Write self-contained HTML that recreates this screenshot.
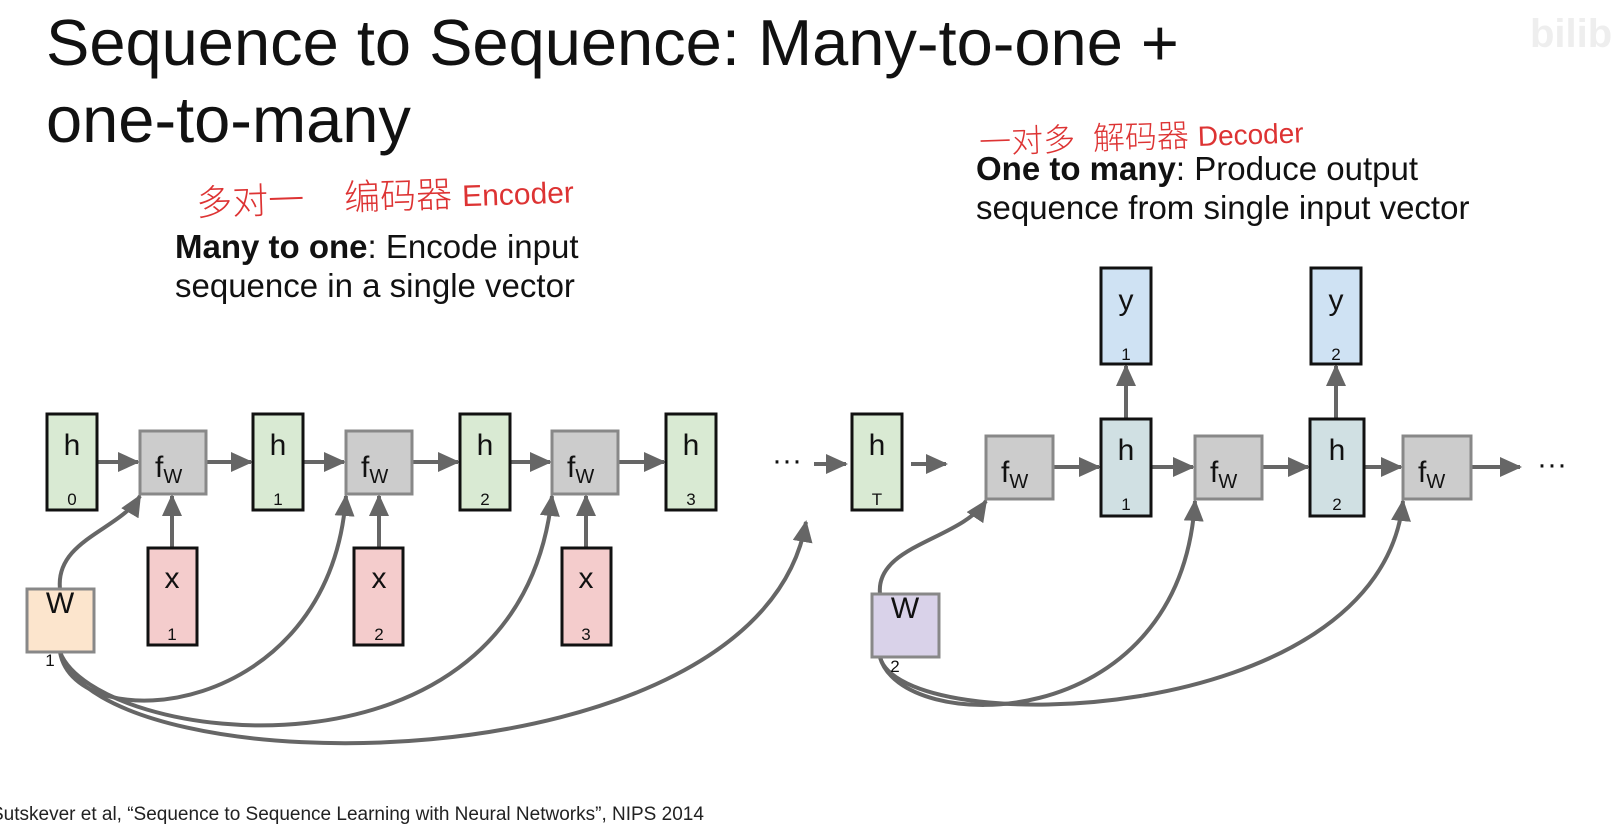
<!DOCTYPE html>
<html><head><meta charset="utf-8"><style>
html,body{margin:0;padding:0;background:#fff;width:1616px;height:834px;overflow:hidden;font-family:"Liberation Sans",Arial,sans-serif}
.t{position:absolute;color:#111;white-space:nowrap}
</style></head><body>
<div class="t" style="left:46px;top:4px;font-size:65px;line-height:77px">Sequence to Sequence: Many-to-one +<br>one-to-many</div>
<div class="t" style="left:175px;top:227px;font-size:33px;line-height:39px"><b>Many to one</b>: Encode input<br>sequence in a single vector</div>
<div class="t" style="left:976px;top:149px;font-size:33px;line-height:39px"><b>One to many</b>: Produce output<br>sequence from single input vector</div>
<div class="t" style="left:-9px;top:805px;font-size:19px;line-height:19px;color:#222">Sutskever et al, “Sequence to Sequence Learning with Neural Networks”, NIPS 2014</div>
<div class="t" style="left:196px;top:168px;font-size:36px;color:#d33;font-family:'Liberation Sans','Noto Sans CJK SC',sans-serif;font-weight:300;transform:rotate(-2deg)">多对一&nbsp;&nbsp;&nbsp;&nbsp;编码器 <span style="font-size:30px">Encoder</span></div>
<div class="t" style="left:979px;top:112px;font-size:32px;color:#d33;font-family:'Liberation Sans','Noto Sans CJK SC',sans-serif;font-weight:300;transform:rotate(-2deg)">一对多&nbsp;&nbsp;解码器 <span style="font-size:28px">Decoder</span></div>
<div class="t" style="left:1530px;top:12px;font-size:40px;font-weight:bold;color:#eee">bilib</div>
<svg width="1616" height="834" style="position:absolute;left:0;top:0" font-family="Liberation Sans,Arial,sans-serif">
<defs><marker id="b" markerWidth="22" markerHeight="20" refX="20" refY="10" orient="auto" markerUnits="userSpaceOnUse"><path d="M0,0 L22,10 L0,20z" fill="#666"/></marker></defs>
<g stroke="#666" stroke-width="4" fill="none" marker-end="url(#b)">
<path d="M98,462 H138"/><path d="M206,462 H251"/><path d="M303,462 H344"/><path d="M412,462 H458"/><path d="M510,462 H550"/><path d="M618,462 H664"/>
<path d="M814,464 H846"/><path d="M911,464 H946"/>
<path d="M1053,467 H1099"/><path d="M1151,467 H1193"/><path d="M1262,467 H1308"/><path d="M1364,467 H1401"/><path d="M1471,467 H1520"/>
<path d="M172,548 V496"/><path d="M379,548 V496"/><path d="M586,548 V496"/>
<path d="M1126,419 V366"/><path d="M1336,419 V366"/>
<path d="M60,589 C55,540 120,530 140,496"/>
<path d="M60,652 C75,740 330,720 346,496"/>
<path d="M60,652 C95,745 520,800 552,496"/>
<path d="M60,652 C100,790 760,790 806,522"/>
<path d="M880,594 C875,545 960,540 986,501"/>
<path d="M880,657 C900,735 1180,740 1195,501"/>
<path d="M880,657 C900,740 1380,730 1403,501"/>
</g>
<g font-size="30" text-anchor="middle" fill="#111">
<g stroke="#111" stroke-width="3"><rect x="47" y="414" width="50" height="96" fill="#d9ead3"/><rect x="253" y="414" width="50" height="96" fill="#d9ead3"/><rect x="460" y="414" width="50" height="96" fill="#d9ead3"/><rect x="666" y="414" width="50" height="96" fill="#d9ead3"/><rect x="852" y="414" width="50" height="96" fill="#d9ead3"/>
<rect x="148" y="548" width="49" height="97" fill="#f4cccc"/><rect x="354" y="548" width="49" height="97" fill="#f4cccc"/><rect x="562" y="548" width="49" height="97" fill="#f4cccc"/>
<rect x="1101" y="419" width="50" height="97" fill="#d0e0e3"/><rect x="1310" y="419" width="54" height="97" fill="#d0e0e3"/>
<rect x="1101" y="268" width="50" height="96" fill="#cfe2f3"/><rect x="1311" y="268" width="50" height="96" fill="#cfe2f3"/></g>
<g stroke="#888" stroke-width="3" fill="#ccc"><rect x="140" y="431" width="66" height="63"/><rect x="346" y="431" width="66" height="63"/><rect x="552" y="431" width="66" height="63"/>
<rect x="986" y="436" width="67" height="63"/><rect x="1195" y="436" width="67" height="63"/><rect x="1403" y="436" width="68" height="63"/>
<rect x="27" y="589" width="67" height="63" fill="#fce5cd"/><rect x="872" y="594" width="67" height="63" fill="#d9d2e9"/></g>
<text x="72" y="455">h</text><text x="278" y="455">h</text><text x="485" y="455">h</text><text x="691" y="455">h</text><text x="877" y="455">h</text><text x="1126" y="460">h</text><text x="1337" y="460">h</text>
<text x="172" y="588">x</text><text x="379" y="588">x</text><text x="586" y="588">x</text>
<text x="1126" y="310">y</text><text x="1336" y="310">y</text>
<text x="60" y="613">W</text><text x="905" y="618">W</text>
<g font-size="17"><text x="72" y="505">0</text><text x="278" y="505">1</text><text x="485" y="505">2</text><text x="691" y="505">3</text><text x="877" y="505">T</text><text x="1126" y="510">1</text><text x="1337" y="510">2</text>
<text x="172" y="640">1</text><text x="379" y="640">2</text><text x="586" y="640">3</text><text x="1126" y="360">1</text><text x="1336" y="360">2</text><text x="50" y="666">1</text><text x="895" y="672">2</text></g>
<g text-anchor="start"><text x="155" y="477">f<tspan font-size="20" dy="6">W</tspan></text><text x="361" y="477">f<tspan font-size="20" dy="6">W</tspan></text><text x="567" y="477">f<tspan font-size="20" dy="6">W</tspan></text>
<text x="1001" y="482">f<tspan font-size="20" dy="6">W</tspan></text><text x="1210" y="482">f<tspan font-size="20" dy="6">W</tspan></text><text x="1418" y="482">f<tspan font-size="20" dy="6">W</tspan></text>
<text x="772" y="470">···</text><text x="1537" y="474">···</text></g>
</g>
</svg>
</body></html>
